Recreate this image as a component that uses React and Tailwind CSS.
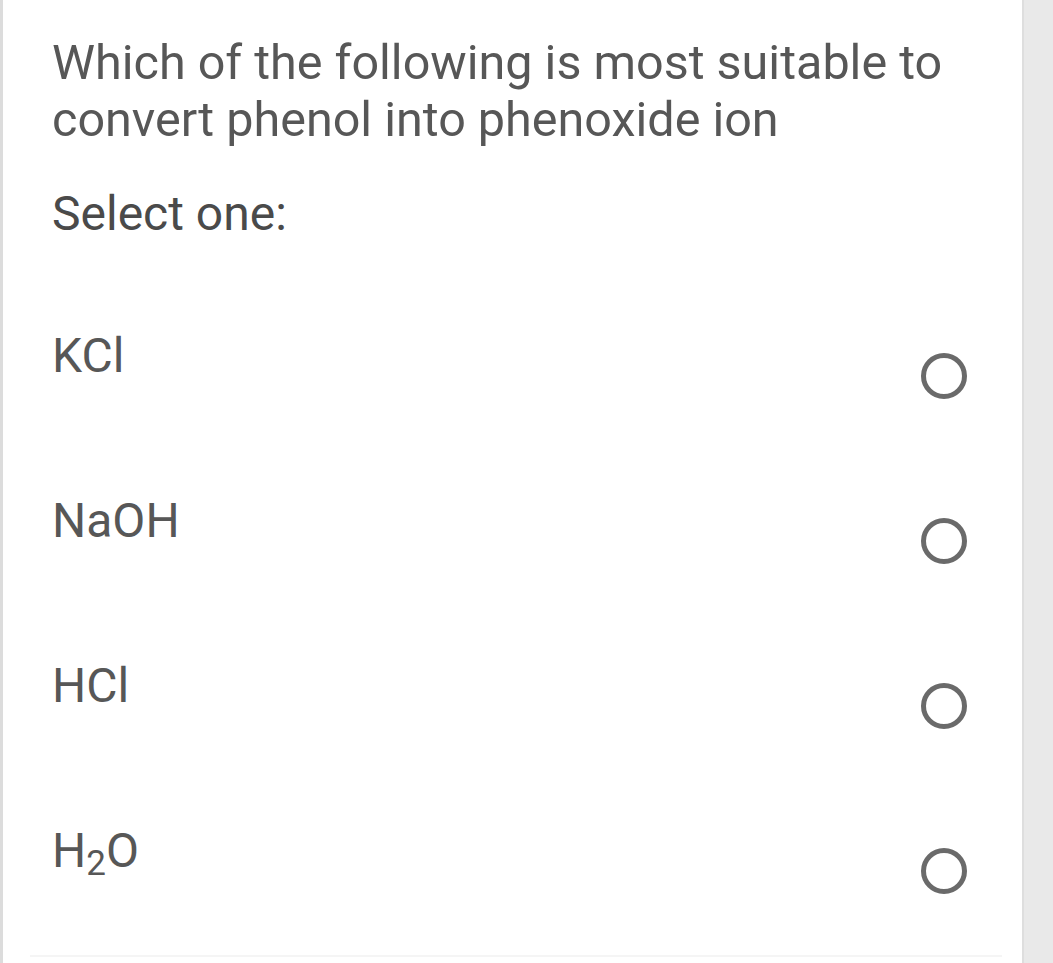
const options = ['KCl', 'NaOH', 'HCl', 'H2O'];

const Radio = () => (
  <span className="mt-[26px] block w-[46px] h-[46px] shrink-0 rounded-full border-[5px] border-[#6a6a6a] bg-white" />
);

const Label = ({ text }) => {
  if (text === 'H2O') {
    return (
      <span>
        H<span className="text-[35px] relative top-[8px]">2</span>O
      </span>
    );
  }
  return <span>{text}</span>;
};

export default function App() {
  return (
    <div
      className="flex w-[1053px] h-[963px] overflow-hidden bg-white text-[#575757]"
      style={{ fontFamily: 'Roboto, "Noto Sans", Arial, sans-serif' }}
    >
      {/* left edge */}
      <div className="w-[3px] shrink-0 bg-[#dcdcdc]" />

      {/* card */}
      <div className="flex flex-1 flex-col">
        <div className="pl-[49px] pr-[40px] pt-[34px]">
          <p className="text-[48.5px] leading-[57px]">
            Which of the following is most suitable to convert phenol into phenoxide ion
          </p>
          <p className="mt-[37px] text-[48px] leading-[57px] text-[#4a4a4a]">Select one:</p>
        </div>

        <div className="mt-[85px] flex flex-col pl-[49px] pr-[55px]">
          {options.map((opt, i) => (
            <div
              key={opt}
              className={`flex items-start justify-between ${i === options.length - 1 ? 'h-[133px]' : 'h-[165px]'}`}
            >
              <div className="text-[48px] leading-[57px]">
                <Label text={opt} />
              </div>
              <Radio />
            </div>
          ))}
        </div>
        <div className="ml-[27px] mr-[20px] h-[2px] bg-[#f5f5f5]" />
      </div>

      {/* right gutter */}
      <div className="w-[31px] shrink-0 border-l-2 border-[#dedede] bg-[#e9e9e9]" />
    </div>
  );
}
